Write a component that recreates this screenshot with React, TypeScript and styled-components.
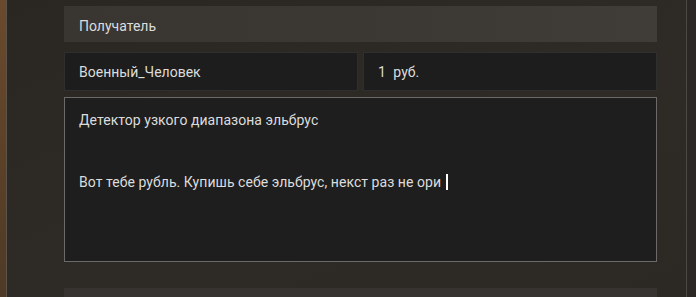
import React from "react";
import styled, { createGlobalStyle } from "styled-components";

const Global = createGlobalStyle`
  html, body { margin: 0; padding: 0; background: #2b2824; }
  body { width: 696px; height: 297px; overflow: hidden; }
  #root { height: 297px; }
`;

const Frame = styled.div`
  display: flex;
  width: 696px;
  height: 297px;
  overflow: hidden;
  font-family: Roboto, "Noto Sans", sans-serif;
  font-size: 14px;
  color: #dcdcdc;
`;

const WoodEdge = styled.div`
  width: 6px;
  flex: none;
  background: linear-gradient(180deg, #6a4a2e 0%, #5c4128 50%, #4e3a26 100%);
`;

const EdgeLine = styled.div<{ $color: string }>`
  width: 1px;
  flex: none;
  background: ${(p) => p.$color};
`;

const Panel = styled.div`
  flex: 1;
  display: flex;
  flex-direction: column;
  padding: 6px 29px 0 57px;
  background: linear-gradient(160deg, #2a2723 0%, #2e2a26 55%, #2c2925 100%);
  & > * { flex-shrink: 0; }
`;

const RightGutter = styled.div`
  width: 9px;
  flex: none;
  background: #2a2724;
`;

const Header = styled.div`
  height: 36px;
  box-sizing: border-box;
  display: flex;
  align-items: center;
  padding: 3px 0 0 15px;
  background: linear-gradient(90deg, #393632 0%, #3b3834 50%, #403d38 100%);
`;

const Row = styled.div`
  display: grid;
  grid-template-columns: 294px 294px;
  column-gap: 5px;
  margin-top: 10px;
`;

const Field = styled.div`
  height: 39px;
  box-sizing: border-box;
  display: flex;
  align-items: center;
  padding-left: 14px;
  background: #1d1d1d;
  border: 1px solid #2f2f2f;
`;

const Money = styled.span`
  word-spacing: 4px;
`;

const TextArea = styled.div`
  margin-top: 6px;
  height: 165px;
  box-sizing: border-box;
  border: 1px solid #6b6a68;
  background: #1e1e1e;
  padding: 12px 14px;
  line-height: 20.5px;
  letter-spacing: 0.05px;
`;

const Line = styled.div`
  height: 20.5px;
  white-space: pre;
  display: flex;
  align-items: center;
`;

const Caret = styled.span`
  display: inline-block;
  width: 2px;
  height: 16px;
  background: #ffffff;
  margin-left: 5px;
`;

const BottomBar = styled.div`
  margin-top: 26px;
  height: 20px;
  background: #363330;
`;

export default function App() {
  return (
    <>
      <Global />
      <Frame>
        <WoodEdge />
        <EdgeLine $color="#5a544c" />
        <Panel>
          <Header>Получатель</Header>
          <Row>
            <Field>Военный_Человек</Field>
            <Field>
              <Money>1 руб.</Money>
            </Field>
          </Row>
          <TextArea>
            <Line>Детектор узкого диапазона эльбрус</Line>
            <Line> </Line>
            <Line> </Line>
            <Line>
              Вот тебе рубль. Купишь себе эльбрус, некст раз не ори
              <Caret />
            </Line>
          </TextArea>
          <BottomBar />
        </Panel>
        <EdgeLine $color="#4b4844" />
        <RightGutter />
      </Frame>
    </>
  );
}
